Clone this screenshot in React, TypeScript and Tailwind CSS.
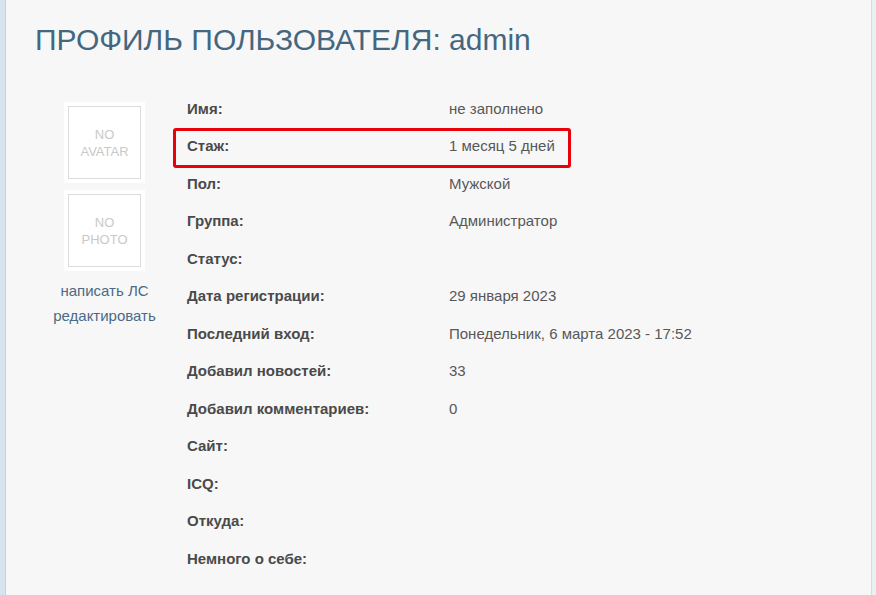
const rows: { label: string; value: string }[] = [
  { label: 'Имя:', value: 'не заполнено' },
  { label: 'Стаж:', value: '1 месяц 5 дней' },
  { label: 'Пол:', value: 'Мужской' },
  { label: 'Группа:', value: 'Администратор' },
  { label: 'Статус:', value: '' },
  { label: 'Дата регистрации:', value: '29 января 2023' },
  { label: 'Последний вход:', value: 'Понедельник, 6 марта 2023 - 17:52' },
  { label: 'Добавил новостей:', value: '33' },
  { label: 'Добавил комментариев:', value: '0' },
  { label: 'Сайт:', value: '' },
  { label: 'ICQ:', value: '' },
  { label: 'Откуда:', value: '' },
  { label: 'Немного о себе:', value: '' },
];

function Placeholder ({ lines }: { lines: string[] }) {
  return (
    <div className="bg-white p-[4px]">
      <div className="w-[73px] h-[73px] border border-[#dcdcdc] flex flex-col items-center justify-center text-[13px] leading-[17px] text-[#c9c9c9]">
        {lines.map((l) => (
          <span key={l}>{l}</span>
        ))}
      </div>
    </div>
  );
}

export default function App () {
  return (
    <div className="flex h-[595px] w-full overflow-hidden bg-[#f7f7f7] font-['Liberation_Sans',Arial,sans-serif]">
      <div className="w-[6px] shrink-0 bg-[#d6e4ef] border-r border-[#c3d2de]" />

      <div className="flex-1 pl-[29px] pt-[22px]">
        <h1 className="text-[30px] leading-[36px] text-[#44677f] font-normal">
          ПРОФИЛЬ ПОЛЬЗОВАТЕЛЯ: admin
        </h1>

        <div className="flex mt-[32px]">
          {/* Avatar column */}
          <div className="w-[139px] flex flex-col items-center pt-[12px]">
            <Placeholder lines={['NO', 'AVATAR']} />
            <div className="mt-[7px]">
              <Placeholder lines={['NO', 'PHOTO']} />
            </div>
            <div className="mt-[7px] flex flex-col items-center text-[15px] leading-[25px] text-[#4a6a86]">
              <a>написать ЛС</a>
              <a>редактировать</a>
            </div>
          </div>

          {/* Info table */}
          <div className="ml-[13px] flex flex-col text-[15px]">
            {rows.map((r, i) => (
              <div key={r.label} className="relative flex items-center h-[37.5px]">
                {i === 1 && (
                  <div className="absolute left-[-14px] top-0 w-[398px] h-[40px] border-[3px] border-[#e8000b] rounded-[3px]" />
                )}
                <span className="w-[262px] font-bold text-[#4a4a4a]">{r.label}</span>
                <span className="text-[#585858]">{r.value}</span>
              </div>
            ))}
          </div>
        </div>
      </div>

      <div className="w-[5px] shrink-0 bg-[#eaeff2] border-l border-[#d5dde2]" />
    </div>
  );
}
